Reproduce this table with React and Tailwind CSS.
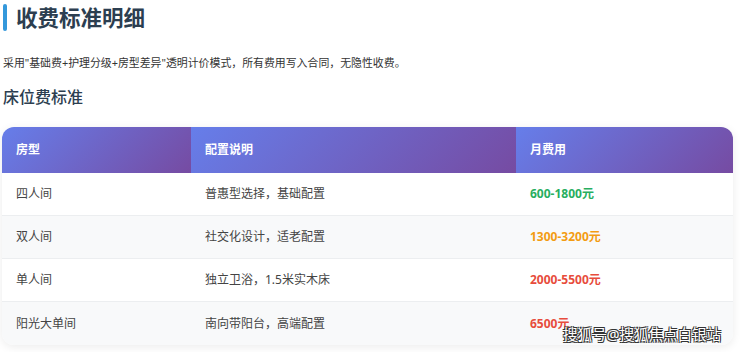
import React from "react";

const rows = [
  { t: "四人间", d: "普惠型选择，基础配置", p: "600-1800元", c: "text-[#27ae60]", bg: "bg-white" },
  { t: "双人间", d: "社交化设计，适老配置", p: "1300-3200元", c: "text-[#f39c12]", bg: "bg-[#f8f9fa]" },
  { t: "单人间", d: "独立卫浴，1.5米实木床", p: "2000-5500元", c: "text-[#e74c3c]", bg: "bg-white" },
  { t: "阳光大单间", d: "南向带阳台，高端配置", p: "6500元", c: "text-[#e74c3c]", bg: "bg-[#f8f9fa]" },
];

const th = "h-[46px] px-[14px] text-left align-middle text-[12px] font-bold text-white bg-[linear-gradient(135deg,#667eea_0%,#764ba2_100%)]";

export default function App() {
  return (
    <div className="relative w-[740px] h-[352px] bg-white overflow-hidden" style={{ fontFamily: '"Noto Sans", "Noto Sans CJK SC", sans-serif' }}>
      <div className="flex items-center pt-[4px] pl-[3px] h-[31px]">
        <div className="w-[4px] h-[27px] rounded-full bg-[#3498db]" />
        <h1 className="ml-[9px] text-[21.5px] leading-[27px] font-bold text-[#2c3e50]">收费标准明细</h1>
      </div>
      <p className="mt-[24px] pl-[3px] text-[10.9px] leading-[16px] text-[#333]">采用"基础费+护理分级+房型差异"透明计价模式，所有费用写入合同，无隐性收费。</p>
      <h2 className="mt-[15px] pl-[3px] text-[16px] leading-[22px] font-medium text-[#2c3e50]">床位费标准</h2>
      <div className="mt-[19px] ml-[2px] w-[731px] rounded-[12px] overflow-hidden shadow-[0_2px_10px_rgba(0,0,0,0.08)]">
        <table className="w-full border-separate border-spacing-0 table-fixed">
          <colgroup>
            <col className="w-[189px]" />
            <col className="w-[325px]" />
            <col className="w-[217px]" />
          </colgroup>
          <thead>
            <tr>
              <th className={th}>房型</th>
              <th className={th}>配置说明</th>
              <th className={th}>月费用</th>
            </tr>
          </thead>
          <tbody>
            {rows.map((r, i) => {
              const b = i < rows.length - 1 ? "border-b border-[#eceef0]" : "";
              return (
                <tr key={i} className={r.bg}>
                  <td className={`h-[43px] px-[14px] text-[12px] text-[#444] ${b}`}>{r.t}</td>
                  <td className={`h-[43px] px-[14px] text-[12px] text-[#444] ${b}`}>{r.d}</td>
                  <td className={`h-[43px] px-[14px] text-[12px] font-bold ${r.c} ${b}`}>{r.p}</td>
                </tr>
              );
            })}
          </tbody>
        </table>
      </div>
      <div className="absolute left-[563px] top-[324px] whitespace-nowrap text-[14.5px] leading-[20px] text-white [text-shadow:1px_1px_0_#333,-1px_-1px_0_#333,1px_-1px_0_#333,-1px_1px_0_#333]">搜狐号@搜狐焦点白银站</div>
    </div>
  );
}
